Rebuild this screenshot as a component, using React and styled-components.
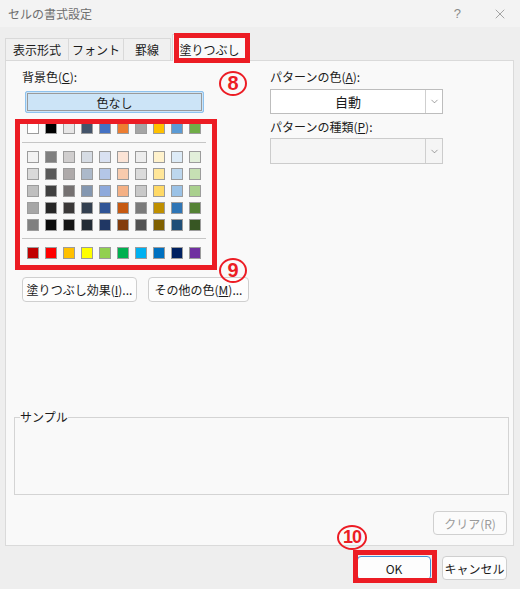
import styled, { createGlobalStyle } from 'styled-components';
import { X, ChevronDown } from 'lucide-react';

const GlobalStyle = createGlobalStyle`
  body {
    margin: 0;
    background: #eeeeee;
    font-family: "Noto Sans CJK JP", "Noto Sans", sans-serif;
    font-size: 12px;
    color: #1b1b1b;
  }
`;

const RED = '#ec1c24';

const themeRow = ['#FFFFFF', '#000000', '#E7E6E6', '#44546A', '#4472C4', '#ED7D31', '#A5A5A5', '#FFC000', '#5B9BD5', '#70AD47'];
const tintRows = [
  ['#F2F2F2', '#7F7F7F', '#D0CECE', '#D6DCE4', '#D9E1F2', '#FCE4D6', '#EDEDED', '#FFF2CC', '#DDEBF7', '#E2EFDA'],
  ['#D9D9D9', '#595959', '#AEAAAA', '#ACB9CA', '#B4C6E7', '#F8CBAD', '#DBDBDB', '#FFE699', '#BDD7EE', '#C6E0B4'],
  ['#BFBFBF', '#404040', '#757171', '#8497B0', '#8EA9DB', '#F4B084', '#C9C9C9', '#FFD966', '#9BC2E6', '#A9D08E'],
  ['#A6A6A6', '#262626', '#3A3838', '#333F4F', '#305496', '#C65911', '#7B7B7B', '#BF8F00', '#2F75B5', '#548235'],
  ['#808080', '#0D0D0D', '#161616', '#222B35', '#203764', '#833C0C', '#525252', '#806000', '#1F4E78', '#375623'],
];
const standardRow = ['#C00000', '#FF0000', '#FFC000', '#FFFF00', '#92D050', '#00B050', '#00B0F0', '#0070C0', '#002060', '#7030A0'];

const tabs = [
  { label: '表示形式', w: 64 },
  { label: 'フォント', w: 56 },
  { label: '罫線', w: 48 },
  { label: '塗りつぶし', w: 75, active: true },
];

const SwatchLine = ({ colors }) => (
  <SwatchRow>
    {colors.map((c, i) => (
      <Swatch key={i} style={{ background: c }} />
    ))}
  </SwatchRow>
);

const App = () => {
  return (
    <>
      <GlobalStyle />
      <Window>
        <TitleBar>
          <Title>セルの書式設定</Title>
          <TitleControls>
            <HelpMark>?</HelpMark>
            <X size={16} strokeWidth={1} color="#7a7a7a" />
          </TitleControls>
        </TitleBar>

        <TabStrip>
          {tabs.map((t) => (
            <Tab key={t.label} $w={t.w} $active={t.active}>
              {t.label}
            </Tab>
          ))}
        </TabStrip>

        <Panel>
          <TopSection>
            <LeftCol>
              <FieldLabel $indent={7}>
                背景色(<u>C</u>):
              </FieldLabel>
              <NoColorButton>色なし</NoColorButton>
              <Palette>
                <SwatchLine colors={themeRow} />
                <PaletteRule />
                <TintBlock>
                  {tintRows.map((row, i) => (
                    <SwatchLine key={i} colors={row} />
                  ))}
                </TintBlock>
                <PaletteRule $gap={7} />
                <SwatchLine colors={standardRow} />
                <RedFrame />
              </Palette>
              <ButtonRow>
                <PushButton $w={115}>
                  塗りつぶし効果(<u>I</u>)...
                </PushButton>
                <PushButton $w={101}>
                  その他の色(<u>M</u>)...
                </PushButton>
              </ButtonRow>
            </LeftCol>

            <RightCol>
              <FieldLabel>
                パターンの色(<u>A</u>):
              </FieldLabel>
              <Select $h={25}>
                <SelectValue>自動</SelectValue>
                <SelectArrow>
                  <ChevronDown size={11} strokeWidth={1.2} color="#555" />
                </SelectArrow>
              </Select>
              <FieldLabel $top={5}>
                パターンの種類(<u>P</u>):
              </FieldLabel>
              <Select $h={26} $disabled $top={3}>
                <SelectValue />
                <SelectArrow>
                  <ChevronDown size={11} strokeWidth={1.2} color="#555" />
                </SelectArrow>
              </Select>
            </RightCol>
          </TopSection>

          <SampleGroup>
            <legend>サンプル</legend>
          </SampleGroup>

          <ClearButton disabled>クリア(R)</ClearButton>
        </Panel>

        <Footer>
          <DialogButton $w={74} $default>
            OK
          </DialogButton>
          <DialogButton $w={65}>キャンセル</DialogButton>
        </Footer>

        <MarkBox $x={174} $y={33} $w={76} $h={30} />
        <MarkBox $x={353} $y={550} $w={84} $h={33} />
        <StepNumber $x={219} $y={71} $w={28}>8</StepNumber>
        <StepNumber $x={219} $y={258} $w={28}>9</StepNumber>
        <StepNumber $x={337} $y={525} $w={30} $tight>
          10
        </StepNumber>
      </Window>
    </>
  );
};

export default App;

const Window = styled.div`
  position: relative;
  width: 520px;
  height: 589px;
  background: #eeeeee;
  display: flex;
  flex-direction: column;
  overflow: hidden;
`;
const TitleBar = styled.div`
  height: 27px;
  background: #f3f3f3;
  display: flex;
  align-items: center;
  justify-content: space-between;
  padding-left: 8px;
  flex-shrink: 0;
`;
const Title = styled.div`
  color: #6e6e6e;
  font-size: 12px;
`;
const TitleControls = styled.div`
  display: flex;
  align-items: center;
  gap: 31px;
  padding-right: 12px;
`;
const HelpMark = styled.span`
  color: #8a8a8a;
  font-family: "Liberation Sans", sans-serif;
  font-size: 13px;
`;
const TabStrip = styled.div`
  display: flex;
  align-items: flex-end;
  height: 26px;
  margin-top: 8px;
  padding-left: 5px;
  position: relative;
  z-index: 1;
  margin-bottom: -1px;
`;
const Tab = styled.div`
  box-sizing: border-box;
  width: ${({ $w }) => $w}px;
  height: ${({ $active }) => ($active ? 27 : 23)}px;
  margin-left: ${({ $active }) => ($active ? 1 : -1)}px;
  border: 1px solid #d9d9d9;
  border-bottom: ${({ $active }) => ($active ? 'none' : '1px solid #d9d9d9')};
  background: ${({ $active }) => ($active ? '#f9f9f9' : '#f0f0f0')};
  display: flex;
  align-items: center;
  justify-content: center;
  font-size: 12px;
  padding-top: ${({ $active }) => ($active ? 2 : 0)}px;
  &:first-child {
    margin-left: 0;
  }
`;
const Panel = styled.div`
  box-sizing: border-box;
  width: 509px;
  height: 486px;
  margin-left: 5px;
  background: #f9f9f9;
  border: 1px solid #dadada;
  display: flex;
  flex-direction: column;
  flex-shrink: 0;
`;
const TopSection = styled.div`
  display: grid;
  grid-template-columns: 255px 173px;
  padding: 8px 0 0 9px;
`;
const LeftCol = styled.div`
  display: flex;
  flex-direction: column;
  align-items: flex-start;
`;
const RightCol = styled.div`
  display: flex;
  flex-direction: column;
`;
const FieldLabel = styled.div`
  height: 16px;
  line-height: 16px;
  margin-left: ${({ $indent }) => $indent || 0}px;
  margin-top: ${({ $top }) => $top || 0}px;
  white-space: nowrap;
`;
const NoColorButton = styled.div`
  box-sizing: border-box;
  width: 179px;
  height: 22px;
  margin: 6px 0 0 10px;
  background: #cce4f7;
  border: 1px solid #8ec2ee;
  border-radius: 2px;
  box-shadow: inset 0 0 0 1px #cce4f7, inset 0 0 0 2px #9a9a9a;
  display: flex;
  align-items: center;
  justify-content: center;
`;
const Palette = styled.div`
  position: relative;
  box-sizing: border-box;
  width: 202px;
  height: 151px;
  margin-top: 6px;
  padding: 3px 0 0 12px;
`;
const SwatchRow = styled.div`
  display: flex;
  gap: 6px;
  height: 12px;
`;
const Swatch = styled.div`
  box-sizing: border-box;
  width: 12px;
  height: 12px;
  border: 1px solid #9c9c9c;
`;
const TintBlock = styled.div`
  display: flex;
  flex-direction: column;
  gap: 5px;
  margin-top: 8px;
`;
const PaletteRule = styled.div`
  width: 184px;
  height: 1px;
  background: #c6c6c6;
  margin: ${({ $gap }) => $gap || 8}px 0 8px -5px;
`;
const RedFrame = styled.div`
  position: absolute;
  inset: 0;
  border: 5px solid ${RED};
  pointer-events: none;
`;
const ButtonRow = styled.div`
  display: flex;
  gap: 11px;
  margin: 7px 0 0 7px;
`;
const PushButton = styled.button`
  box-sizing: border-box;
  width: ${({ $w }) => $w}px;
  height: 25px;
  padding: 0;
  background: #fdfdfd;
  border: 1px solid #cfcfcf;
  border-radius: 4px;
  font-family: inherit;
  font-size: 12px;
  color: #1b1b1b;
  white-space: nowrap;
`;
const Select = styled.div`
  box-sizing: border-box;
  height: ${({ $h }) => $h}px;
  margin-top: ${({ $top }) => $top || 4}px;
  display: flex;
  background: ${({ $disabled }) => ($disabled ? '#f5f5f5' : '#ffffff')};
  border: 1px solid ${({ $disabled }) => ($disabled ? '#cccccc' : '#bdbdbd')};
`;
const SelectValue = styled.div`
  flex: 1;
  display: flex;
  align-items: center;
  justify-content: center;
  font-size: 13px;
`;
const SelectArrow = styled.div`
  width: 16px;
  border-left: 1px solid #cfcfcf;
  display: flex;
  align-items: center;
  justify-content: center;
`;
const SampleGroup = styled.fieldset`
  box-sizing: border-box;
  width: 495px;
  height: 86px;
  margin: 107px 0 0 8px;
  padding: 0;
  border: 1px solid #d4d4d4;
  legend {
    padding: 0;
    margin-left: 5px;
    line-height: 16px;
    font-size: 12px;
  }
`;
const ClearButton = styled.button`
  box-sizing: border-box;
  align-self: flex-end;
  width: 74px;
  height: 24px;
  margin: 16px 6px 0 0;
  padding: 0;
  background: #fbfbfb;
  border: 1px solid #d0d0d0;
  border-radius: 4px;
  font-family: inherit;
  font-size: 12px;
  color: #9a9a9a;
`;
const Footer = styled.div`
  display: flex;
  justify-content: flex-end;
  gap: 11px;
  padding: 10px 13px 0 0;
`;
const DialogButton = styled.button`
  box-sizing: border-box;
  width: ${({ $w }) => $w}px;
  height: 24px;
  padding: 0;
  background: #fdfdfd;
  border: 1px solid ${({ $default }) => ($default ? '#3d8fd6' : '#cfcfcf')};
  border-radius: 4px;
  font-family: inherit;
  font-size: 12px;
  color: #1b1b1b;
`;
const MarkBox = styled.div`
  position: absolute;
  box-sizing: border-box;
  left: ${({ $x }) => $x}px;
  top: ${({ $y }) => $y}px;
  width: ${({ $w }) => $w}px;
  height: ${({ $h }) => $h}px;
  border: 5px solid ${RED};
  pointer-events: none;
  z-index: 5;
`;
const StepNumber = styled.div`
  position: absolute;
  box-sizing: border-box;
  left: ${({ $x }) => $x}px;
  top: ${({ $y }) => $y}px;
  width: ${({ $w }) => $w}px;
  height: 25px;
  border: 2px solid ${RED};
  border-radius: 50%;
  color: ${RED};
  font-family: "Liberation Sans", sans-serif;
  font-weight: bold;
  font-size: ${({ $tight }) => ($tight ? 18 : 20)}px;
  letter-spacing: ${({ $tight }) => ($tight ? '-1px' : '0')};
  display: flex;
  align-items: center;
  justify-content: center;
  z-index: 5;
`;
